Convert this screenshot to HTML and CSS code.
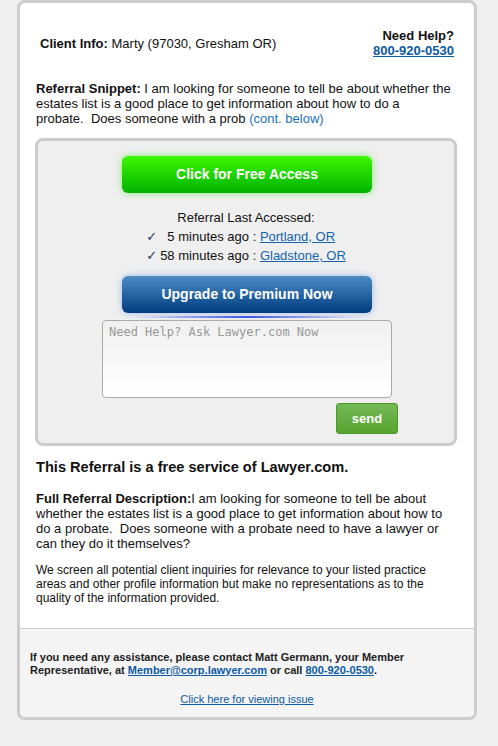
FILE: index.html
```html
<!DOCTYPE html>
<html lang="en">
<head>
    <meta charset="UTF-8"/>
    <title>Lawyer.com Referral</title>
    <link rel="stylesheet" href="styles.css">
</head>
<body>
<div class="card">
    <div class="header">
        <div class="client"><b>Client Info:</b> Marty (97030, Gresham OR)</div>
        <div class="help">
            <b>Need Help?</b>
            <a href="#">800-920-0530</a>
        </div>
    </div>

    <p class="snippet"><b>Referral Snippet:</b> I am looking for someone to tell be about whether the estates list is a good place to get information about how to do a probate.&nbsp; Does someone with a prob <span class="cont">(cont. below)</span></p>

    <div class="access-box">
        <a class="btn btn-free" href="#">Click for Free Access</a>
        <div class="accessed">
            <div>Referral Last Accessed:</div>
            <div class="visits">
                <span class="check">&#10003;</span><span class="num">5</span><span>&nbsp;minutes ago : <a href="#">Portland, OR</a></span>
                <span class="check">&#10003;</span><span class="num">58</span><span>&nbsp;minutes ago : <a href="#">Gladstone, OR</a></span>
            </div>
        </div>
        <a class="btn btn-premium" href="#">Upgrade to Premium Now</a>
        <div class="premium-line"></div>
        <form class="ask">
            <textarea placeholder="Need Help? Ask Lawyer.com Now"></textarea>
            <button class="send" type="button">send</button>
        </form>
    </div>

    <h2 class="free-note">This Referral is a free service of Lawyer.com.</h2>
    <p class="full"><b>Full Referral Description:</b>I am looking for someone to tell be about whether the estates list is a good place to get information about how to do a probate.&nbsp; Does someone with a probate need to have a lawyer or can they do it themselves?</p>
    <p class="screen">We screen all potential client inquiries for relevance to your listed practice areas and other profile information but make no representations as to the quality of the information provided.</p>

    <div class="footer">
        <p>If you need any assistance, please contact Matt Germann, your Member Representative, at <a href="#">Member@corp.lawyer.com</a> or call <a href="#">800-920-0530</a>.</p>
        <p class="view"><a href="#">Click here for viewing issue</a></p>
    </div>
</div>
</body>
</html>
```

FILE: styles.css
```css
body {
    margin: 0;
    background-color: #efefef;
    font-family: "Liberation Sans", Arial, sans-serif;
    font-size: 13px;
    color: #111;
}

.card {
    width: 454px;
    margin-left: 17px;
    border: 3px solid #ccc;
    border-radius: 8px;
    background-color: #fff;
    overflow: hidden;
}

.header {
    display: flex;
    justify-content: space-between;
    align-items: center;
    padding: 25px 20px 0 20px;
    line-height: 15px;
}

.help {
    display: flex;
    flex-direction: column;
    text-align: right;
}

.help a {
    font-weight: bold;
    color: #0b5aa2;
}

.snippet {
    margin: 23px 20px 0 16px;
    line-height: 15px;
}

.cont {
    color: #1a6fb8;
}

.access-box {
    margin: 12px 17px 0 15px;
    padding: 15px 0 9px;
    border: 3px solid #ccc;
    border-radius: 8px;
    background-color: #efefef;
    text-align: center;
}

.btn {
    display: block;
    width: 250px;
    height: 37px;
    margin-left: 84px;
    line-height: 37px;
    border-radius: 6px;
    color: #fff;
    font-size: 14px;
    font-weight: bold;
    text-decoration: none;
}

.btn-free {
    background: linear-gradient(#3ef700, #00b200);
    box-shadow: 0 0 7px rgba(40, 230, 0, 0.55);
}

.btn-premium {
    margin-top: 11px;
    background: linear-gradient(#4c8bc6, #003c7f);
    box-shadow: 0 0 7px rgba(60, 120, 230, 0.45);
}

.premium-line {
    width: 225px;
    height: 2px;
    margin: 3px 0 0 97px;
    background: linear-gradient(90deg, rgba(60, 90, 240, 0), rgba(40, 70, 230, 0.9), rgba(60, 90, 240, 0));
}

.accessed {
    margin-top: 15px;
    line-height: 19px;
}

.accessed a {
    color: #1465ad;
}

.visits {
    display: inline-grid;
    grid-template-columns: 14px auto auto;
    text-align: left;
}

.check {
    color: #1a3866;
    font-family: "DejaVu Sans", sans-serif;
    font-size: 13px;
    font-weight: bold;
}

.num {
    text-align: right;
}

.ask {
    width: 296px;
    margin: 2px 0 0 64px;
    display: flex;
    flex-direction: column;
    align-items: flex-end;
}

.ask textarea {
    align-self: flex-start;
    box-sizing: border-box;
    width: 290px;
    height: 78px;
    margin: 0;
    padding: 4px 6px;
    border: 1px solid #aaa;
    border-radius: 4px;
    background: linear-gradient(#f0f0f0, #fff);
    font-family: "DejaVu Sans Mono", monospace;
    font-size: 12px;
    resize: none;
}

.ask textarea::placeholder {
    color: #999;
}

.send {
    width: 62px;
    height: 31px;
    margin-top: 5px;
    border: 1px solid #4b9a2a;
    border-radius: 3px;
    background: linear-gradient(#74b956, #56a42e);
    color: #fff;
    font-family: "Liberation Sans", Arial, sans-serif;
    font-size: 13px;
    font-weight: bold;
}

.free-note {
    margin: 13px 16px 0;
    font-size: 14.6px;
    line-height: 17px;
}

.full {
    margin: 15px 16px 0;
    line-height: 15px;
}

.screen {
    margin: 12px 16px 0;
    font-size: 12px;
    line-height: 14px;
}

.footer {
    margin-top: 23px;
    padding: 22px 10px 11px;
    border-top: 1px solid #ccc;
    background-color: #f4f4f4;
    font-size: 11px;
    font-weight: bold;
    line-height: 13px;
    color: #222;
}

.footer p {
    margin: 0;
}

.footer a {
    color: #0b5aa2;
}

.footer .view {
    margin-top: 16px;
    text-align: center;
    font-weight: normal;
}
```
